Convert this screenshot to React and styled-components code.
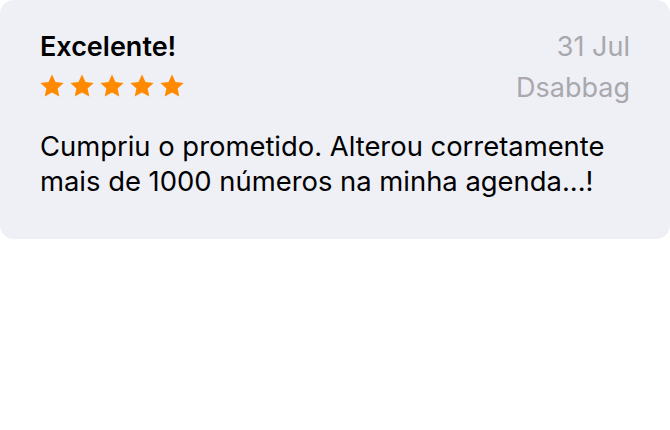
import React from 'react';
import styled, { createGlobalStyle } from 'styled-components';

const Global = createGlobalStyle`
  body {
    margin: 0;
    background: #fff;
    font-family: Inter, "Noto Sans", sans-serif;
  }
`;

const Card = styled.div`
  width: 670px;
  box-sizing: border-box;
  background: #efeff6;
  border-radius: 14px;
  padding: 30px 40px 0 40px;
  height: 239px;
`;

const Header = styled.div`
  display: flex;
  justify-content: space-between;
  align-items: flex-start;
`;

const Left = styled.div`
  display: flex;
  flex-direction: column;
`;

const Title = styled.div`
  font-size: 27px;
  font-weight: 600;
  color: #000;
  line-height: 34px;
`;

const Stars = styled.div`
  display: flex;
  gap: 6px;
  margin-top: 10px;
`;

const Meta = styled.div`
  text-align: right;
  color: #a8a8ad;
  font-size: 27px;
  line-height: 41px;
  margin-top: -4px;
`;

const Body = styled.p`
  margin: 21px 0 0;
  font-size: 27.4px;
  line-height: 35px;
  color: #000;
`;

const Star = () => (
  <svg width="24" height="24" viewBox="0 0 24 24">
    <path
      d="M12 0.6l3.5 7.4 8.1 0.9-6 5.6 1.7 8.1L12 18.6 4.7 22.6l1.7-8.1-6-5.6 8.1-0.9z"
      fill="#ff8a00"
    />
  </svg>
);

export default function App() {
  return (
    <>
      <Global />
      <Card>
        <Header>
          <Left>
            <Title>Excelente!</Title>
            <Stars>
              {[0, 1, 2, 3, 4].map(i => <Star key={i} />)}
            </Stars>
          </Left>
          <Meta>
            <div>31 Jul</div>
            <div>Dsabbag</div>
          </Meta>
        </Header>
        <Body>
          Cumpriu o prometido. Alterou corretamente<br />
          mais de 1000 números na minha agenda...!
        </Body>
      </Card>
    </>
  );
}
